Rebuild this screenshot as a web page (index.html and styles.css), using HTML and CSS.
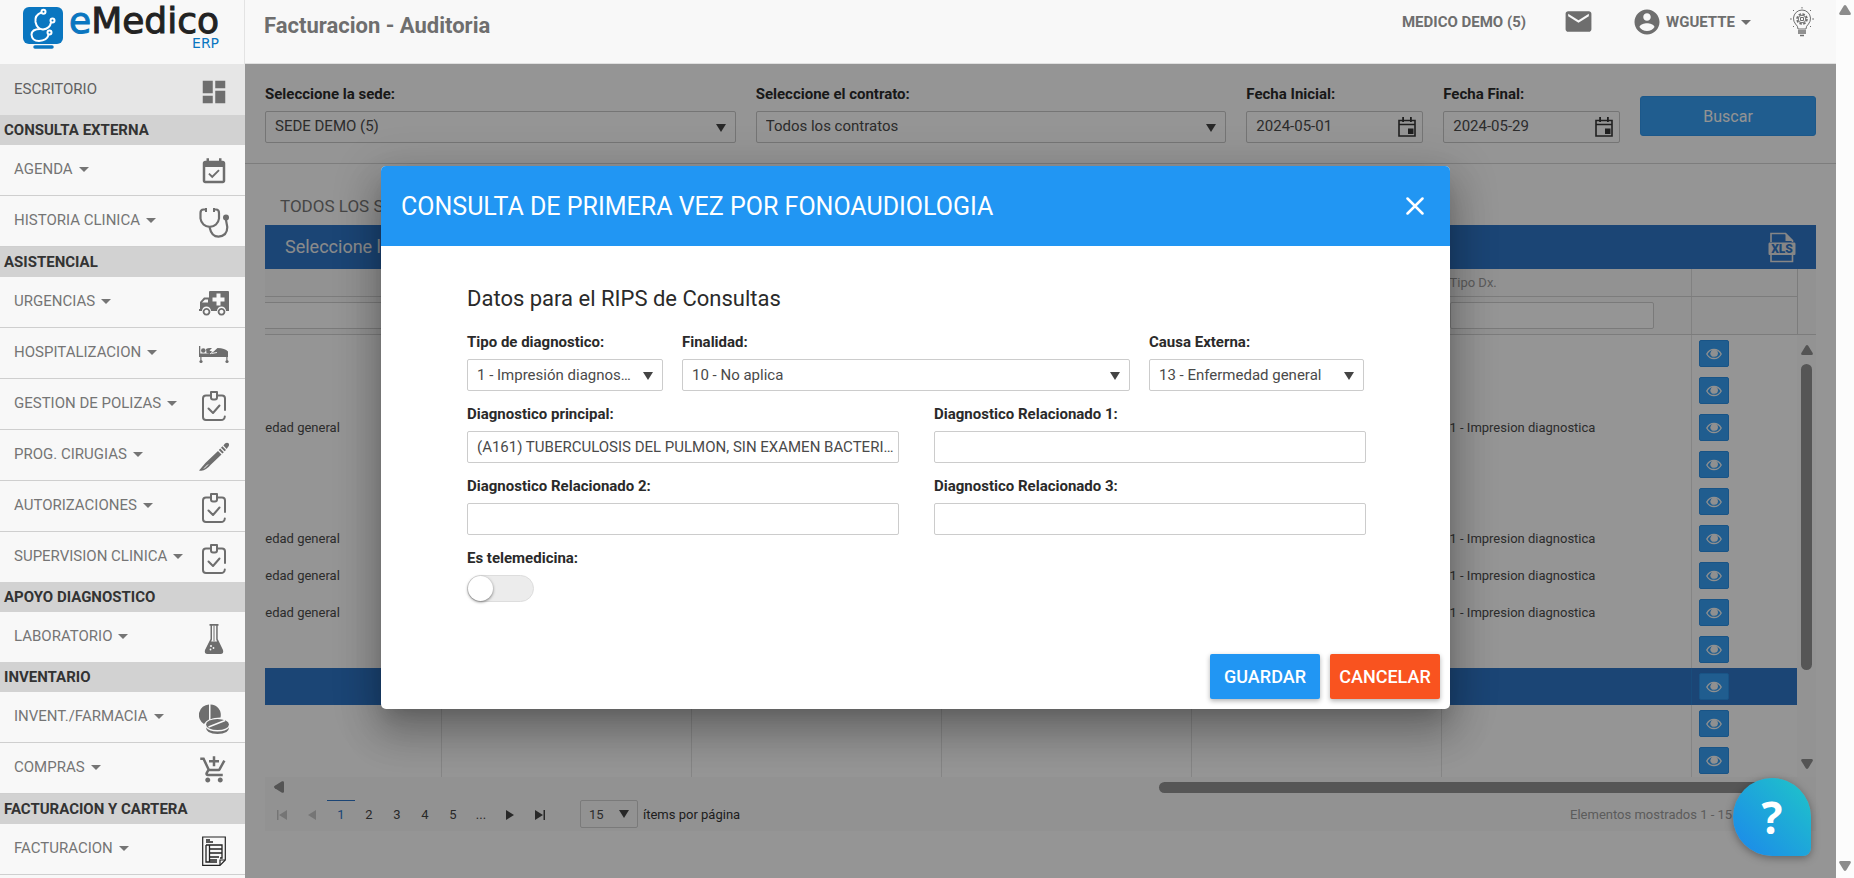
FILE: index.html
```html
<!DOCTYPE html>
<html lang="es">
<head>
<meta charset="utf-8">
<title>Facturacion - Auditoria</title>
<link rel="stylesheet" href="styles.css">
</head>
<body>
<svg class="sprite" aria-hidden="true">
  <symbol id="i-dashboard" viewBox="0 0 24 24"><path d="M3 13h8V3H3v10zm0 8h8v-6H3v6zm10 0h8V11h-8v10zm0-18v6h8V3h-8z"/></symbol>
  <symbol id="i-agenda" viewBox="0 0 24 24"><path d="M16.53 11.06L15.47 10l-4.88 4.88-2.12-2.12-1.06 1.06L10.59 17l5.94-5.94zM19 3h-1V1h-2v2H8V1H6v2H5c-1.11 0-1.99.9-1.99 2L3 19c0 1.1.89 2 2 2h14c1.1 0 2-.9 2-2V5c0-1.1-.9-2-2-2zm0 16H5V8h14v11z"/></symbol>
  <symbol id="i-steth" viewBox="0 0 30 30"><g fill="none" stroke="currentColor" stroke-width="2.2" stroke-linecap="round"><path d="M6.500 1.500H4.500Q1.500 1.500 1.500 5V10.500A9.300 9.300 0 0 0 20 10.500V5Q20 1.500 17 1.500H15"/><path d="M10.800 20Q12.500 28.600 19.500 28.600Q28.300 28 28.300 19L27 12"/></g><circle cx="27" cy="9.500" r="3"/><path d="M6 0h2v4H6zM14 0h2v4h-2z"/></symbol>
  <symbol id="i-ambulance" viewBox="0 0 30 30"><path fill-rule="evenodd" d="M10 3Q10 2 11 2H29Q30 2 30 3V22H27A4.500 4.500 0 0 0 18 22H12A4.500 4.500 0 0 0 3 22H0V20H1V13L5 8.500H10zM3 13.500H9V10.500H6zM17.500 4.500V8.500H13.500V12.500H17.500V16.500H21.500V12.500H25.500V8.500H21.500V4.500z"/><path fill-rule="evenodd" d="M7.500 19a3.800 3.800 0 1 0 .01 0zM7.500 20.800a2 2 0 1 1-.01 0zM22.500 19a3.800 3.800 0 1 0 .01 0zM22.500 20.800a2 2 0 1 1-.01 0z"/></symbol>
  <symbol id="i-bed" viewBox="0 0 30 30"><path d="M0 6h1.300v7.500H29v3.500H28.500v3.500h-1.200V17H2.500v3.500H1.300V17H0z"/><circle cx="2" cy="21.500" r="1.600"/><circle cx="28" cy="21.500" r="1.600"/><circle cx="4.300" cy="10.500" r="2.300"/><path d="M7 9Q9 7.500 13 8L10.500 10.500L14 12L18.500 8Q26 8 29 11.500V14H17L14.500 15L7.500 13z"/><path d="M11 14L14 11.500L16.500 8.500M12.500 13.500L18 12.500" fill="none" stroke="#f8f8f8" stroke-width=".9"/></symbol>
  <symbol id="i-clipboard" viewBox="0 0 30 30"><g fill="none" stroke="currentColor" stroke-width="2" stroke-linecap="round" stroke-linejoin="round"><path d="M11 4.500H7Q4 4.500 4 7.500V26Q4 29 7 29H22Q25.500 29 25.800 25.500"/><path d="M19 4.500H23Q26 4.500 26 7.500V19"/><path d="M12 1H18V6.500Q18 8.500 16 8.500H14Q12 8.500 12 6.500z"/><path d="M9.500 17.500L14 22L20.500 14.500"/></g></symbol>
  <symbol id="i-scalpel" viewBox="0 0 30 30"><path d="M0 28.500L3 25Q6 21 9 18.500L19 9L22.500 12.500L12 22.500Q10 25 7 27Q4 29.500 0 28.500zM19.800 8L21.200 6.500L24.800 10.200L23.400 11.600zM22 5.700L23.400 4.200L27 7.900L25.600 9.300zM24.400 3.500L26 1.500Q28 0 29.500 1.200Q30.800 3 29 5L27.700 7z"/><path d="M5 26.500L9 22.500" stroke="#f8f8f8" stroke-width="1"/></symbol>
  <symbol id="i-flask" viewBox="0 0 30 30"><path fill-rule="evenodd" d="M10.500 0H19.500V1.800H18.700V15L24 26Q25 30 21.500 30H8.500Q5 30 6 26L11.500 15V1.800H10.500zM13 1.800V15.500L12.200 17.500H18L17.200 15.500V1.800z"/><path d="M14.500 1.800h1v15.500h-1z"/><g fill="#f8f8f8"><circle cx="12" cy="22" r="1"/><circle cx="14.500" cy="24" r=".9"/><circle cx="11.500" cy="25.500" r=".9"/></g></symbol>
  <symbol id="i-pills" viewBox="0 0 30 30"><path d="M10 .5A10.500 10.500 0 0 0 5 20Q7 16.500 10 15.500zM11.500 .5A10.500 10.500 0 0 1 21.500 13.500Q15 13.500 11.500 15.200z"/><ellipse cx="18.500" cy="20.500" rx="11.500" ry="5.500"/><path d="M9.500 23L26 16.500" stroke="#f8f8f8" stroke-width="1.400"/><path d="M7 23.500Q10 27.500 18.500 27.500Q27 27.500 30 23.500Q30 30 18.500 30Q7 30 7 23.500z"/></symbol>
  <symbol id="i-cart" viewBox="0 0 24 24"><path d="M11 9h2V6h3V4h-3V1h-2v3H8v2h3v3zm-4 9c-1.100 0-1.990.9-1.990 2S5.900 22 7 22s2-.9 2-2-.9-2-2-2zm10 0c-1.100 0-1.990.9-1.990 2s.89 2 1.990 2 2-.9 2-2-.9-2-2-2zm-9.830-3.250l.03-.12.9-1.630h7.450c.75 0 1.410-.41 1.750-1.030l3.860-7.010L19.420 4h-.01l-1.100 2-2.760 5H8.530l-.13-.27L6.160 6l-.95-2-.94-2H1v2h2l3.600 7.590-1.350 2.450c-.16.28-.25.61-.25.96 0 1.100.9 2 2 2h12v-2H7.420c-.13 0-.25-.11-.25-.25z"/></symbol>
  <symbol id="i-invoice" viewBox="0 0 30 30"><g fill="none" stroke="#222" stroke-width="1.200"><path d="M3.700 1H26.300V24L21 29.400H3.700z"/><path d="M21 29V24H26"/><path d="M7 9H23V22H21M18 26H7V9M10.500 9V26M10.500 13H23M10.500 17H23M10.500 21H20M10.500 24H18M7 4H11M7 6H14" stroke-width="1.300"/></g></symbol>
  <symbol id="i-mail" viewBox="0 0 24 24"><path d="M20 4H4c-1.100 0-1.990.9-1.990 2L2 18c0 1.100.9 2 2 2h16c1.100 0 2-.9 2-2V6c0-1.100-.9-2-2-2zm0 4l-8 5-8-5V6l8 5 8-5v2z"/></symbol>
  <symbol id="i-user" viewBox="0 0 24 24"><path d="M12 2C6.480 2 2 6.480 2 12s4.480 10 10 10 10-4.480 10-10S17.520 2 12 2zm0 3c1.660 0 3 1.340 3 3s-1.340 3-3 3-3-1.340-3-3 1.340-3 3-3zm0 14.200c-2.500 0-4.710-1.280-6-3.220.03-1.990 4-3.080 6-3.080 1.990 0 5.970 1.090 6 3.080-1.290 1.940-3.500 3.220-6 3.220z"/></symbol>
  <symbol id="i-bulb" viewBox="0 0 30 30"><g fill="none" stroke="currentColor"><path d="M11 22Q11 19 8.500 17A8.500 8.500 0 1 1 21.500 17Q19 19 19 22z"/><circle cx="15" cy="12" r="5" stroke-width="1.600" stroke-dasharray="2.500 1.400"/><circle cx="15" cy="12" r="3.800"/><path d="M13.500 10.500h3v3h-3z"/><path d="M11 24H19M11 26H19M13 28.500H17" stroke-width="1.500"/><path d="M15 0V1.500M6 3L7 4M24 3L23 4M3 12H4.800M27 12H25.200M6 20L7 19M24 20L23 19"/></g></symbol>
  <symbol id="i-eye" viewBox="0 0 16 12"><path d="M.8 6Q3.300 1.300 8 1.300Q12.700 1.300 15.200 6Q12.700 10.700 8 10.700Q3.300 10.700 .8 6z" fill="none" stroke="currentColor" stroke-width="1.300"/><circle cx="8.300" cy="5.200" r="3.600"/><path d="M4.600 4.500A3.900 3.900 0 0 0 8.500 9.200" fill="none" stroke="currentColor" stroke-width=".6"/></symbol>
  <symbol id="i-calendar" viewBox="0 0 18 20"><path d="M1 3.500H17V19H1zM1 7.500H17" fill="none" stroke="currentColor" stroke-width="1.600"/><path d="M4.200 0h1.800v5H4.200zM12 0h1.800v5H12zM10 11.500h5.500v5.500H10z"/></symbol>
  <symbol id="i-up" viewBox="0 0 12 10"><path d="M4.800.8Q6-.8 7.200.8L11.700 8Q12.300 10 10.500 10H1.500Q-.3 10 .3 8z"/></symbol>
</svg>

<div class="app">
  <aside class="sidebar">
    <a class="brand" href="#" aria-label="eMedico ERP">
      <svg class="brand-mark" viewBox="0 0 40 42">
        <rect width="40" height="37" rx="6" fill="#0a76c0"/>
        <path d="M12 40H29" stroke="#0a76c0" stroke-width="3.500" stroke-linecap="round"/>
        <g fill="none" stroke="#fff" stroke-width="2"><path d="M18.500 5.500Q11.500 8 12.500 15Q14 22 20 22.500Q27 21.500 28 15.500"/><circle cx="20.500" cy="4.800" r="2"/><circle cx="29.500" cy="13.500" r="2"/><path d="M17 22Q9 22 8.500 27.500Q9 34 16 34Q24 33.500 25.500 28"/><circle cx="26.500" cy="25.500" r="2"/></g>
      </svg>
      <span class="brand-text"><span class="brand-name"><span class="brand-e">e</span>Medico</span><span class="brand-sub">ERP</span></span>
    </a>
    <nav>
      <ul class="nav-list"><li><a class="nav-item nav-item--home" href="#"><span>ESCRITORIO</span><svg class="nav-icon"><use href="#i-dashboard"/></svg></a></li></ul>
      <h2 class="nav-head">CONSULTA EXTERNA</h2>
      <ul class="nav-list">
        <li><a class="nav-item" href="#"><span class="caret">AGENDA</span><svg class="nav-icon"><use href="#i-agenda"/></svg></a></li>
        <li><a class="nav-item" href="#"><span class="caret">HISTORIA CLINICA</span><svg class="nav-icon"><use href="#i-steth"/></svg></a></li>
      </ul>
      <h2 class="nav-head">ASISTENCIAL</h2>
      <ul class="nav-list">
        <li><a class="nav-item" href="#"><span class="caret">URGENCIAS</span><svg class="nav-icon"><use href="#i-ambulance"/></svg></a></li>
        <li><a class="nav-item" href="#"><span class="caret">HOSPITALIZACION</span><svg class="nav-icon"><use href="#i-bed"/></svg></a></li>
        <li><a class="nav-item" href="#"><span class="caret">GESTION DE POLIZAS</span><svg class="nav-icon"><use href="#i-clipboard"/></svg></a></li>
        <li><a class="nav-item" href="#"><span class="caret">PROG. CIRUGIAS</span><svg class="nav-icon"><use href="#i-scalpel"/></svg></a></li>
        <li><a class="nav-item" href="#"><span class="caret">AUTORIZACIONES</span><svg class="nav-icon"><use href="#i-clipboard"/></svg></a></li>
        <li><a class="nav-item nav-item--flush" href="#"><span class="caret">SUPERVISION CLINICA</span><svg class="nav-icon"><use href="#i-clipboard"/></svg></a></li>
      </ul>
      <h2 class="nav-head">APOYO DIAGNOSTICO</h2>
      <ul class="nav-list">
        <li><a class="nav-item nav-item--flush" href="#"><span class="caret">LABORATORIO</span><svg class="nav-icon"><use href="#i-flask"/></svg></a></li>
      </ul>
      <h2 class="nav-head">INVENTARIO</h2>
      <ul class="nav-list">
        <li><a class="nav-item" href="#"><span class="caret">INVENT./FARMACIA</span><svg class="nav-icon"><use href="#i-pills"/></svg></a></li>
        <li><a class="nav-item" href="#"><span class="caret">COMPRAS</span><svg class="nav-icon"><use href="#i-cart"/></svg></a></li>
      </ul>
      <h2 class="nav-head">FACTURACION Y CARTERA</h2>
      <ul class="nav-list">
        <li><a class="nav-item" href="#"><span class="caret">FACTURACION</span><svg class="nav-icon"><use href="#i-invoice"/></svg></a></li>
      </ul>
    </nav>
  </aside>

  <div class="page">
    <header class="topbar">
      <h1 class="page-title">Facturacion - Auditoria</h1>
      <div class="topbar-tools">
        <span class="company">MEDICO DEMO (5)</span>
        <button class="icon-btn" aria-label="Mensajes"><svg class="icon-mail"><use href="#i-mail"/></svg></button>
        <button class="icon-btn user-btn"><svg class="icon-user"><use href="#i-user"/></svg><span class="caret">WGUETTE</span></button>
        <button class="icon-btn" aria-label="Ayuda"><svg class="icon-bulb"><use href="#i-bulb"/></svg></button>
      </div>
    </header>

    <main class="content">
      <form class="filters">
        <div class="field"><label for="sede">Seleccione la sede:</label><div class="select"><select id="sede"><option>SEDE DEMO (5)</option></select></div></div>
        <div class="field"><label for="contrato">Seleccione el contrato:</label><div class="select"><select id="contrato"><option>Todos los contratos</option></select></div></div>
        <div class="field"><label for="fini">Fecha Inicial:</label><div class="date"><input id="fini" type="text" value="2024-05-01"><svg class="icon-cal"><use href="#i-calendar"/></svg></div></div>
        <div class="field"><label for="ffin">Fecha Final:</label><div class="date"><input id="ffin" type="text" value="2024-05-29"><svg class="icon-cal"><use href="#i-calendar"/></svg></div></div>
        <button class="search-btn" type="button">Buscar</button>
      </form>

      <section class="results">
        <h2 class="results-title">TODOS LOS SERVICIOS</h2>
        <div class="grid-toolbar"><span>Seleccione los registros</span><button class="icon-btn" aria-label="Exportar XLS"><svg class="icon-xls" viewBox="0 0 28 31"><path d="M3 10V1.500H17.500L24.500 8.500V10M3 23V29.500H24.500V23" fill="none" stroke="currentColor" stroke-width="1.600"/><path d="M17.500 1V9H25zM1.500 10.500H26.500Q27.500 10.500 27.500 12V21.500Q27.500 23 26.500 23H1.500Q.5 23 .5 21.500V12Q.5 10.500 1.500 10.500z"/><text class="xls-text" x="14" y="21" text-anchor="middle">XLS</text></svg></button></div>
        <div class="grid-head">
          <div class="grid-clip">
            <table class="grid">
              <colgroup><col span="6" class="col-data"><col class="col-action"></colgroup>
              <tr class="head-names"><th></th><th></th><th></th><th></th><th></th><th>Tipo Dx.</th><th></th></tr>
              <tr class="head-filters"><td><input aria-label="Filtro 1"></td><td><input aria-label="Filtro 2"></td><td><input aria-label="Filtro 3"></td><td><input aria-label="Filtro 4"></td><td><input aria-label="Filtro 5"></td><td><input aria-label="Filtro Tipo Dx."></td><td></td></tr>
            </table>
          </div>
          <div class="head-gutter"></div>
        </div>
        <div class="grid-body">
          <div class="grid-clip">
            <table class="grid grid--rows">
              <colgroup><col span="6" class="col-data"><col class="col-action"></colgroup>
              <tr><td></td><td></td><td></td><td></td><td></td><td></td><td><button class="eye" aria-label="Ver"><svg><use href="#i-eye"/></svg></button></td></tr>
              <tr><td></td><td></td><td></td><td></td><td></td><td></td><td><button class="eye" aria-label="Ver"><svg><use href="#i-eye"/></svg></button></td></tr>
              <tr><td>13 - Enfermedad general</td><td></td><td></td><td></td><td></td><td>1 - Impresion diagnostica</td><td><button class="eye" aria-label="Ver"><svg><use href="#i-eye"/></svg></button></td></tr>
              <tr><td></td><td></td><td></td><td></td><td></td><td></td><td><button class="eye" aria-label="Ver"><svg><use href="#i-eye"/></svg></button></td></tr>
              <tr><td></td><td></td><td></td><td></td><td></td><td></td><td><button class="eye" aria-label="Ver"><svg><use href="#i-eye"/></svg></button></td></tr>
              <tr><td>13 - Enfermedad general</td><td></td><td></td><td></td><td></td><td>1 - Impresion diagnostica</td><td><button class="eye" aria-label="Ver"><svg><use href="#i-eye"/></svg></button></td></tr>
              <tr><td>13 - Enfermedad general</td><td></td><td></td><td></td><td></td><td>1 - Impresion diagnostica</td><td><button class="eye" aria-label="Ver"><svg><use href="#i-eye"/></svg></button></td></tr>
              <tr><td>13 - Enfermedad general</td><td></td><td></td><td></td><td></td><td>1 - Impresion diagnostica</td><td><button class="eye" aria-label="Ver"><svg><use href="#i-eye"/></svg></button></td></tr>
              <tr><td></td><td></td><td></td><td></td><td></td><td></td><td><button class="eye" aria-label="Ver"><svg><use href="#i-eye"/></svg></button></td></tr>
              <tr class="is-selected"><td></td><td></td><td></td><td></td><td></td><td></td><td><button class="eye" aria-label="Ver"><svg><use href="#i-eye"/></svg></button></td></tr>
              <tr><td></td><td></td><td></td><td></td><td></td><td></td><td><button class="eye" aria-label="Ver"><svg><use href="#i-eye"/></svg></button></td></tr>
              <tr><td></td><td></td><td></td><td></td><td></td><td></td><td><button class="eye" aria-label="Ver"><svg><use href="#i-eye"/></svg></button></td></tr>
            </table>
          </div>
          <div class="vscroll"><svg class="arrow"><use href="#i-up"/></svg><div class="vtrack"><div class="vthumb"></div></div><svg class="arrow arrow--down"><use href="#i-up"/></svg></div>
        </div>
        <div class="hscroll"><svg class="arrow arrow--left"><use href="#i-up"/></svg><div class="hthumb"></div></div>
        <div class="pager">
          <button class="page-nav" disabled aria-label="Primera"><svg viewBox="0 0 12 12"><path d="M1 1h1.500v10H1zM11 1v10L3 6z"/></svg></button>
          <button class="page-nav" disabled aria-label="Anterior"><svg viewBox="0 0 12 12"><path d="M10 1v10L2 6z"/></svg></button>
          <button class="page-num is-current">1</button><button class="page-num">2</button><button class="page-num">3</button><button class="page-num">4</button><button class="page-num">5</button><button class="page-num">...</button>
          <button class="page-nav" aria-label="Siguiente"><svg viewBox="0 0 12 12"><path d="M2 1v10l8-5z"/></svg></button>
          <button class="page-nav" aria-label="Ultima"><svg viewBox="0 0 12 12"><path d="M1 1v10l8-5zM9.500 1H11v10H9.500z"/></svg></button>
          <div class="select page-size"><select id="psize"><option>15</option></select></div>
          <label class="page-size-label" for="psize">ítems por página</label>
          <span class="pager-info">Elementos mostrados 1 - 15 de 2548</span>
        </div>
      </section>

      <div class="backdrop">
        <div class="modal" role="dialog" aria-labelledby="mtitle">
          <div class="modal-head">
            <h2 id="mtitle">CONSULTA DE PRIMERA VEZ POR FONOAUDIOLOGIA</h2>
            <button class="icon-btn" aria-label="Cerrar"><svg class="icon-close" viewBox="0 0 18 18"><path d="M1.500 1.500L16.500 16.500M16.500 1.500L1.500 16.500"/></svg></button>
          </div>
          <form class="modal-body">
            <h3>Datos para el RIPS de Consultas</h3>
            <div class="row row--three">
              <div class="field"><label for="tipo">Tipo de diagnostico:</label><div class="select"><select id="tipo"><option>1 - Impresión diagnostica</option></select></div></div>
              <div class="field"><label for="fin">Finalidad:</label><div class="select"><select id="fin"><option>10 - No aplica</option></select></div></div>
              <div class="field"><label for="causa">Causa Externa:</label><div class="select"><select id="causa"><option>13 - Enfermedad general</option></select></div></div>
            </div>
            <div class="row row--two">
              <div class="field"><label for="dx">Diagnostico principal:</label><input id="dx" class="text-input" type="text" value="(A161) TUBERCULOSIS DEL PULMON, SIN EXAMEN BACTERIOLOGICO E HISTOLOGICO"></div>
              <div class="field"><label for="dx1">Diagnostico Relacionado 1:</label><input id="dx1" class="text-input" type="text"></div>
              <div class="field"><label for="dx2">Diagnostico Relacionado 2:</label><input id="dx2" class="text-input" type="text"></div>
              <div class="field"><label for="dx3">Diagnostico Relacionado 3:</label><input id="dx3" class="text-input" type="text"></div>
            </div>
            <div class="field"><label for="tele">Es telemedicina:</label><input id="tele" class="switch" type="checkbox"></div>
          </form>
          <div class="modal-foot"><button class="btn btn--save">GUARDAR</button><button class="btn btn--cancel">CANCELAR</button></div>
        </div>
      </div>
      <button class="help" aria-label="Ayuda en linea">?</button>
    </main>
  </div>
  <div class="page-scroll"><svg class="arrow"><use href="#i-up"/></svg><svg class="arrow arrow--down"><use href="#i-up"/></svg></div>
</div>
</body>
</html>
```
FILE: styles.css
```css
* { box-sizing: border-box; }
body { margin: 0; font-family: Roboto, "Liberation Sans", sans-serif; font-size: 15px; color: #333; background: #fcfcfc; }
h1, h2, h3, ul { margin: 0; padding: 0; font-weight: 400; }
ul { list-style: none; }
a { text-decoration: none; color: inherit; }
button, input, select { font: inherit; color: inherit; }
svg { fill: currentColor; display: block; flex: none; }
.sprite { position: absolute; width: 0; height: 0; }
.app { display: flex; height: 100vh; overflow: hidden; }
.icon-btn { border: 0; padding: 0; background: none; display: flex; align-items: center; cursor: pointer; }

/* Sidebar */
.sidebar { width: 245px; flex: none; background: #f8f8f8; overflow: hidden; }
.brand { display: flex; align-items: flex-start; gap: 6px; height: 64px; padding: 7px 0 0 23px; border-right: 1px solid #e3e3e3; }
.brand-mark { width: 40px; height: 42px; }
.brand-text { display: flex; flex-direction: column; align-items: flex-end; font-family: "DejaVu Sans", sans-serif; color: #222; }
.brand-name { font-size: 36px; line-height: 28px; -webkit-text-stroke: 1px currentColor; }
.brand-e { color: #0a76c0; }
.brand-sub { font-size: 14px; line-height: 16px; color: #0a76c0; }
.nav-item { display: flex; align-items: center; justify-content: space-between; height: 51px; padding: 0 16px 2px 14px; color: #757575; border-bottom: 1px solid #cfcfcf; }
.nav-item--flush { height: 50px; border-bottom: 0; }
.nav-item--home { background: #e6e6e6; color: #616161; border-bottom: 0; }
.nav-icon { width: 30px; height: 30px; margin-top: 6px; color: #6e6e6e; }
.nav-head { height: 30px; line-height: 30px; padding-left: 4px; font-size: 15px; font-weight: 700; background: #d2d2d2; color: #333; }
.caret::after { content: ""; display: inline-block; margin-left: 6px; vertical-align: 2px; border: 5px solid transparent; border-top-color: currentColor; border-bottom: 0; }

/* Top bar */
.page { flex: 1; min-width: 0; display: flex; flex-direction: column; }
.topbar { display: flex; justify-content: space-between; height: 64px; padding: 0 19px 20px; background: #f8f8f8; border-bottom: 1px solid #e0e0e0; color: #6e6e6e; }
.page-title { font-size: 22px; line-height: 52px; font-weight: 700; }
.topbar-tools { display: flex; align-items: center; font-weight: 700; }
.company { margin-right: 37px; }
.icon-mail { width: 31px; height: 31px; }
.icon-user { width: 30px; height: 30px; }
.user-btn { gap: 4px; margin: 0 36px 0 38px; font-weight: 700; }
.icon-bulb { width: 30px; height: 30px; }

/* Content */
.content { position: relative; flex: 1; min-height: 0; background: #f8f8f8; overflow: hidden; }
.filters { display: grid; grid-template-columns: 471fr 471fr 177fr 177fr 176fr; gap: 20px; padding: 19px 20px 20px; border-bottom: 1px solid #d0d0d0; }
.field { display: flex; flex-direction: column; gap: 5px; min-width: 0; }
.field label { font-weight: 700; line-height: 23px; color: #2a2a2a; }
.select, .date { position: relative; height: 32px; }
.select select, .date input, .text-input { width: 100%; height: 32px; padding: 0 9px; margin: 0; border: 1px solid #ccc; border-radius: 2px; background: #fff; color: #4a4a4a; text-overflow: ellipsis; outline: 0; }
.content .filters select, .date input { padding-bottom: 2px; background: transparent; border-color: #c4c4c4; }
.text-input { padding-right: 3px; }
.select select { appearance: none; padding-right: 28px; overflow: hidden; white-space: nowrap; }
.select::after { content: ""; position: absolute; right: 10px; top: 13px; border: 5px solid transparent; border-top: 8px solid #444; border-bottom: 0; pointer-events: none; }
.icon-cal { position: absolute; right: 7px; top: 6px; width: 18px; height: 20px; color: #333; }
.search-btn { height: 40px; margin-top: 13px; font-size: 16px; border: 1px solid #2f93e6; border-radius: 3px; background: #369cee; color: #f5f5f5; }
.results { padding: 33px 20px 0; }
.results-title { padding: 0 15px 9px; font-size: 17px; line-height: 19px; color: #757575; }
.grid-toolbar { display: flex; align-items: center; justify-content: space-between; height: 44px; padding: 0 20px; background: #2d73c4; color: #e8e8e8; font-size: 18px; }
.grid-toolbar span { padding-bottom: 2px; }
.icon-xls { width: 28px; height: 31px; color: #e0e0e0; }
.xls-text { font-size: 12px; font-weight: 900; fill: #2d73c4; }
.grid-head, .grid-body { display: flex; }
.grid-head { background: #f4f4f4; border-bottom: 1px solid #cfcfcf; }
.head-gutter { width: 19px; border-left: 1px solid #cfcfcf; }
.grid-clip { flex: 1; min-width: 0; display: flex; justify-content: flex-end; overflow: hidden; }
.grid { flex: none; width: 1606px; border-collapse: collapse; table-layout: fixed; font-size: 13px; }
.col-data { width: 250px; }
.col-action { width: 106px; }
.grid th { height: 27px; padding: 0 8px; text-align: left; font-weight: 400; color: #999; border-bottom: 1px solid #cfcfcf; border-right: 1px solid #d8d8d8; }
.head-filters td { height: 38px; padding: 0 8px; border-right: 1px solid #d8d8d8; }
.grid tr > :last-child { border-right: 0; }
.head-filters input { display: block; width: 204px; height: 27px; border: 1px solid #ccc; border-radius: 2px; background: #f8f8f8; }
.grid-body { height: 442px; }
.grid--rows td { height: 37px; padding: 0 8px; border-right: 1px solid #dedede; white-space: nowrap; color: #4a4a4a; }
.grid--rows td:last-child { padding: 0 7px; }
.is-selected { background: #2d73c4; }
.grid--rows .is-selected td { border-color: #2b7fcf; }
.eye { display: flex; align-items: center; justify-content: center; width: 30px; height: 27px; padding: 0; border: 1px solid #2b8ce0; border-radius: 2px; background: #369cee; color: #f0f0f0; }
.eye svg { width: 16px; height: 12px; }
.arrow { width: 12px; height: 10px; color: #8c8c8c; }
.arrow--down { transform: rotate(180deg); }
.arrow--left { transform: rotate(270deg); }
.vscroll { width: 19px; display: flex; flex-direction: column; align-items: center; padding: 10px 0 8px; background: #f6f6f6; }
.vtrack { flex: 1; width: 11px; padding: 9px 0; }
.vthumb { height: 306px; border-radius: 6px; background: #8f8f8f; }
.hscroll { display: flex; align-items: center; justify-content: space-between; height: 20px; padding: 0 42px 0 8px; background: #f4f4f4; }
.hthumb { width: 41%; height: 11px; border-radius: 6px; background: #8f8f8f; }
.pager { display: flex; align-items: center; height: 34px; padding-left: 2px; background: #f4f4f4; font-size: 13px; }
.page-nav, .page-num { width: 28px; height: 28px; padding: 0; border: 0; border-top: 1px solid transparent; background: none; display: flex; align-items: center; justify-content: center; color: #444; }
.page-nav { width: 30px; }
.page-nav svg { width: 12px; height: 12px; }
.page-nav:disabled { color: #c4c4c4; }
.is-current { border-top: 1px solid #2d73c4; color: #2d73c4; }
.page-size { width: 58px; height: 28px; margin: 0 5px 0 25px; }
.page-size.select select { height: 28px; padding: 0 8px; background: transparent; }
.page-size.select::after { top: 10px; right: 9px; }
.pager-info { margin-left: auto; padding-right: 34px; color: #999; }

/* Dialog */
.backdrop { position: absolute; inset: 0; display: flex; align-items: flex-start; padding: 102px 386px 0 136px; background: rgba(0, 0, 0, .4); }
.modal { flex: 1; background: #fff; border-radius: 5px; overflow: hidden; box-shadow: 0 9px 46px 8px rgba(0, 0, 0, .14), 0 11px 15px -7px rgba(0, 0, 0, .12), 0 24px 38px 3px rgba(0, 0, 0, .2); }
.modal-head { display: flex; align-items: center; justify-content: space-between; height: 80px; padding: 0 26px 0 20px; background: #2196f3; color: #fff; }
.modal-head h2 { font-size: 25px; }
.icon-close { width: 18px; height: 18px; fill: none; stroke: #fff; stroke-width: 2.5; stroke-linecap: round; }
.modal-body { display: flex; flex-direction: column; gap: 12px; padding: 37px 84px 42px 86px; }
.modal-body h3 { font-size: 22px; line-height: 32px; margin-bottom: 4px; color: #2a2a2a; }
.row { display: grid; gap: 12px 35px; }
.row--three { grid-template-columns: 196fr 448fr 215fr; column-gap: 19px; padding-right: 2px; }
.row--two { grid-template-columns: 1fr 1fr; }
.switch { appearance: none; position: relative; width: 67px; height: 27px; margin: 0; border: 1px solid #ddd; border-radius: 14px; background: #ececec; }
.switch::before { content: ""; position: absolute; left: 0; top: 0; width: 25px; height: 25px; border-radius: 50%; background: #fff; box-shadow: 0 1px 3px rgba(0, 0, 0, .5); }
.modal-foot { display: flex; justify-content: flex-end; gap: 10px; padding: 10px; }
.btn { width: 110px; height: 45px; padding: 0; border: 0; border-radius: 2px; font-size: 18px; font-weight: 500; color: #fff; box-shadow: 0 2px 5px rgba(0, 0, 0, .3); }
.btn--save { background: #2196f3; }
.btn--cancel { background: #f9531f; }

/* Floating help */
.help { position: absolute; right: 25px; bottom: 22px; width: 78px; height: 78px; padding: 0; border: 0; border-radius: 50% 50% 8px 50%; background: linear-gradient(45deg, #1c86ec, #1fc6c8); color: #fff; font-family: "Open Sans", sans-serif; font-size: 44px; font-weight: 700; line-height: 78px; box-shadow: 0 2px 8px rgba(0, 0, 0, .35); }
.page-scroll { width: 18px; flex: none; display: flex; flex-direction: column; justify-content: space-between; align-items: center; padding: 5px 0 7px; background: #fcfcfc; }
```
